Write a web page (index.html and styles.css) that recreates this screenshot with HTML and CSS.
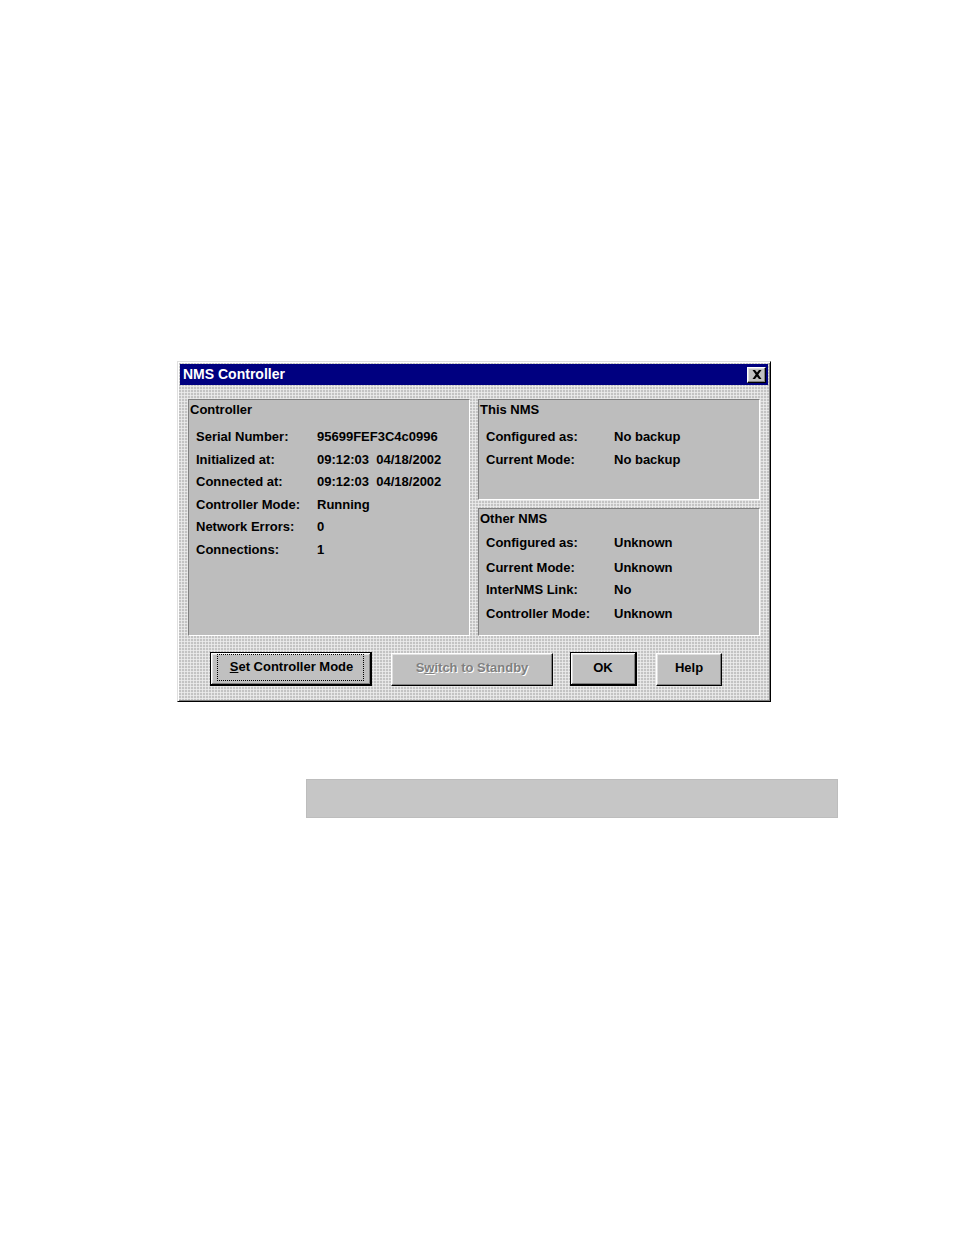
FILE: index.html
```html
<!DOCTYPE html>
<html>
<head>
<meta charset="utf-8">
<title>NMS Controller</title>
<link rel="stylesheet" href="styles.css">
</head>
<body>
<div class="page">
  <div class="dialog">
    <div class="titlebar">
      <span class="title">NMS Controller</span>
      <span class="close"><svg width="10" height="9" viewBox="0 0 10 9"><path d="M0.5 0h2.5l2 2.6L7 0h2.5L6.3 4.5 9.5 9H7L5 6.4 3 9H0.5l3.2-4.5z" fill="#000"/></svg></span>
    </div>
    <div class="content">
      <div class="panels">
        <div class="panel p-controller">
          <div class="legend">Controller</div>
          <div class="rows c-rows">
            <div class="row"><span class="lbl">Serial Number:</span><span class="val">95699FEF3C4c0996</span></div>
            <div class="row"><span class="lbl">Initialized at:</span><span class="val">09:12:03  04/18/2002</span></div>
            <div class="row"><span class="lbl">Connected at:</span><span class="val">09:12:03  04/18/2002</span></div>
            <div class="row"><span class="lbl">Controller Mode:</span><span class="val">Running</span></div>
            <div class="row"><span class="lbl">Network Errors:</span><span class="val">0</span></div>
            <div class="row"><span class="lbl">Connections:</span><span class="val">1</span></div>
          </div>
        </div>
        <div class="right-col">
          <div class="panel p-this">
            <div class="legend">This NMS</div>
            <div class="rows n-rows">
              <div class="row"><span class="lbl">Configured as:</span><span class="val">No backup</span></div>
              <div class="row"><span class="lbl">Current Mode:</span><span class="val">No backup</span></div>
            </div>
          </div>
          <div class="panel p-other">
            <div class="legend">Other NMS</div>
            <div class="rows n-rows o-rows">
              <div class="row r1"><span class="lbl">Configured as:</span><span class="val">Unknown</span></div>
              <div class="row r2"><span class="lbl">Current Mode:</span><span class="val">Unknown</span></div>
              <div class="row r3"><span class="lbl">InterNMS Link:</span><span class="val">No</span></div>
              <div class="row r4"><span class="lbl">Controller Mode:</span><span class="val">Unknown</span></div>
            </div>
          </div>
        </div>
      </div>
      <div class="buttons">
        <div class="btn default w-wide"><span class="focus"><u>S</u>et Controller Mode</span></div>
        <div class="btn disabled w-wide b-switch"><span class="inner">S<u>w</u>itch to Standby</span></div>
        <div class="btn default w-ok b-ok"><span class="inner">OK</span></div>
        <div class="btn w-help b-help"><span class="inner">Help</span></div>
      </div>
    </div>
  </div>
  <div class="graybar"></div>
</div>
</body>
</html>
```
FILE: styles.css
```css
html, body {
  margin: 0;
  padding: 0;
  background: #ffffff;
}
.page {
  padding: 361px 0 0 177px;
  font-family: "Liberation Sans", Arial, sans-serif;
  font-weight: bold;
  font-size: 13px;
  color: #000;
}
.dialog {
  width: 594px;
  height: 341px;
  box-sizing: border-box;
  border: 1px solid;
  border-color: #dfdfdf #000 #000 #dfdfdf;
  box-shadow: inset 1px 1px #fff, inset -1px -1px #808080;
  padding: 2px;
  background-color: #c3c3c3;
  background-image:
    linear-gradient(90deg, rgba(240,240,240,0.75) 1px, transparent 1px),
    linear-gradient(rgba(240,240,240,0.75) 1px, transparent 1px);
  background-size: 3px 3px;
  display: flex;
  flex-direction: column;
}
.titlebar {
  height: 21px;
  background: #000080;
  display: flex;
  align-items: center;
  justify-content: space-between;
  padding: 0 2px 0 3px;
}
.title {
  color: #fff;
  font-size: 14px;
  line-height: 21px;
}
.close {
  width: 19px;
  height: 16px;
  box-sizing: border-box;
  background: #c0c0c0;
  border: 1px solid;
  border-color: #fff #000 #000 #fff;
  box-shadow: inset -1px -1px #808080, inset 1px 1px #dfdfdf;
  display: flex;
  align-items: center;
  justify-content: center;
}
.content {
  padding: 14px 0 0 8px;
}
.panels {
  display: flex;
  gap: 8px;
}
.panel {
  background: #bdbdbd;
  box-sizing: border-box;
  border: 1px solid;
  border-color: #808080 #fff #fff #808080;
  padding: 2px 1px 0 1px;
}
.p-controller {
  width: 282px;
  height: 237px;
}
.right-col {
  display: flex;
  flex-direction: column;
  gap: 8px;
}
.p-this {
  width: 282px;
  height: 101px;
}
.p-other {
  width: 282px;
  height: 128px;
}
.legend {
  line-height: 16px;
  height: 16px;
}
.rows {
  margin: 8px 0 0 6px;
}
.row {
  display: flex;
  height: 22.5px;
  line-height: 22.5px;
  white-space: pre;
}
.c-rows .lbl {
  width: 121px;
}
.n-rows .lbl {
  width: 128px;
}
.o-rows {
  margin-top: 5px;
}
.o-rows .r1 { height: 24px; line-height: 22px; }
.o-rows .r2 { height: 23px; line-height: 24px; }
.o-rows .r3 { height: 23px; line-height: 22px; }
.o-rows .r4 { height: 24px; line-height: 24px; }
.buttons {
  display: flex;
  align-items: flex-start;
  margin: 16px 0 0 22px;
}
.btn {
  height: 33px;
  box-sizing: border-box;
  background: #c0c0c0;
  border: 1px solid;
  border-color: #fff #000 #000 #fff;
  box-shadow: inset -1px -1px #808080, inset 1px 1px #dfdfdf;
  display: flex;
  align-items: center;
  justify-content: center;
  font-size: 13px;
  margin-top: 1px;
  padding-bottom: 4px;
}
.btn.default {
  height: 34px;
  margin-top: 0;
  padding-bottom: 2px;
  border: 2px solid #000;
  border-top-width: 1px;
  border-left-width: 1px;
  box-shadow: inset 1px 1px #fff, inset -1px -1px #808080, inset 2px 2px #dfdfdf;
}
.w-wide { width: 162px; }
.w-ok { width: 67px; }
.w-help { width: 66px; }
.b-switch { margin-left: 19px; }
.b-ok { margin-left: 17px; }
.b-help { margin-left: 19px; }
.focus {
  border: 1px dotted #000;
  padding: 5px 10px 6px 12px;
  line-height: 14px;
}
.btn.disabled {
  color: #808080;
  text-shadow: 1px 1px 0 #fff;
}
.graybar {
  width: 532px;
  height: 39px;
  box-sizing: border-box;
  margin: 77px 0 0 129px;
  background: #c6c6c6;
  border: 1px solid #bdbdbd;
}
```
